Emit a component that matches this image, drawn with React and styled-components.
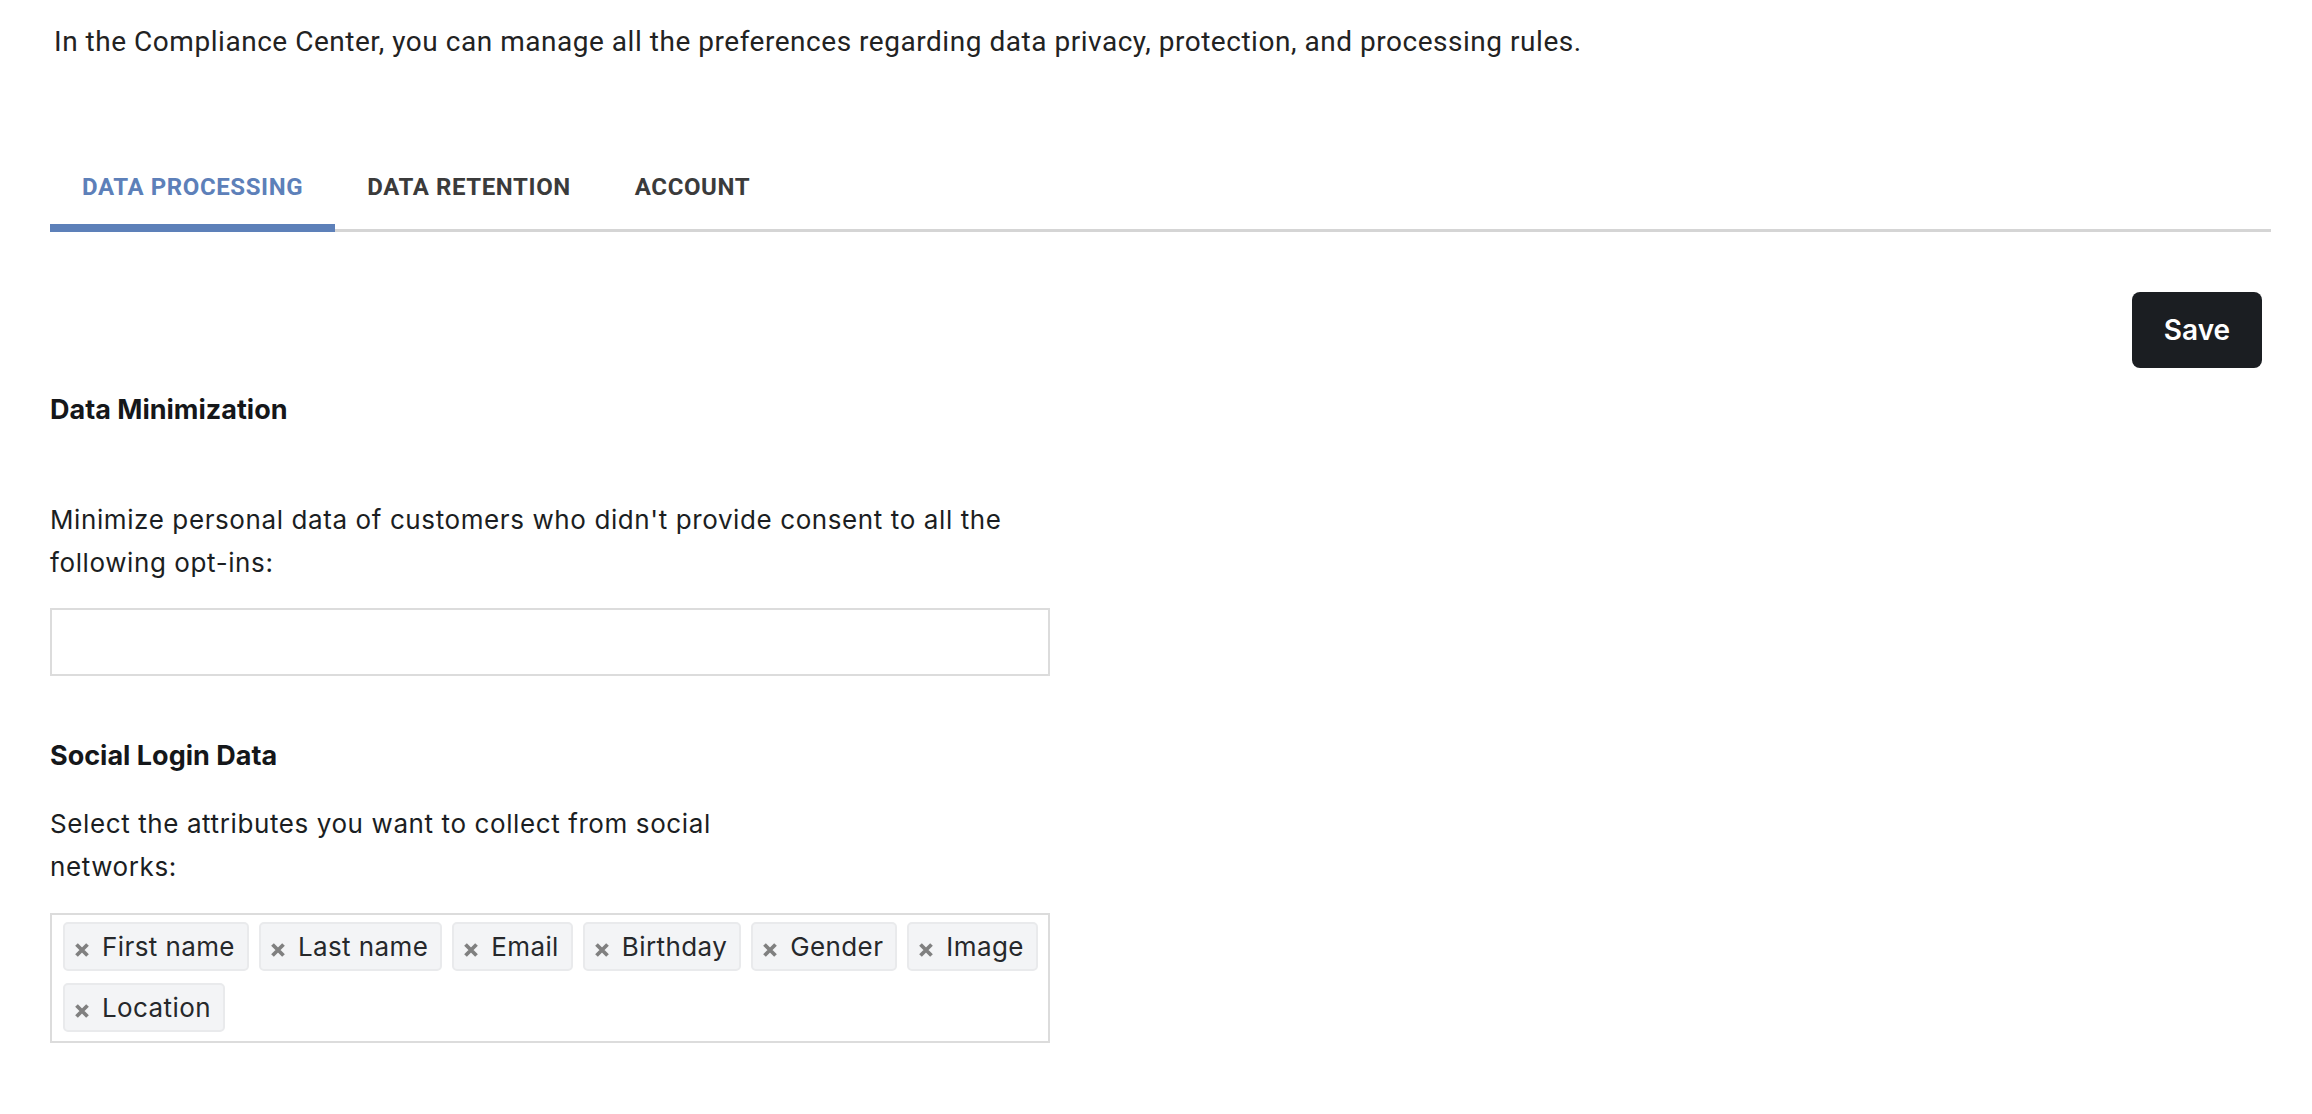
import React from 'react';
import styled, { createGlobalStyle } from 'styled-components';

const GlobalStyle = createGlobalStyle`
  body {
    margin: 0;
    background: #fff;
  }
`;

const Page = styled.div`
  padding: 21px 41px 40px 50px;
`;

const Intro = styled.p`
  margin: 0 0 0 4px;
  font-family: Roboto, 'Liberation Sans', sans-serif;
  font-size: 28px;
  letter-spacing: 0.53px;
  line-height: 42px;
  color: #222;
`;

const TabList = styled.div`
  display: flex;
  margin-top: 87px;
  border-bottom: 3px solid #d5d5d5;
`;

const Tab = styled.button`
  margin: 0 0 -3px;
  padding: 21px 32px;
  border: none;
  border-bottom: 8px solid ${(p) => (p.$active ? '#5d80b9' : 'transparent')};
  background: none;
  font-family: Roboto, 'Liberation Sans', sans-serif;
  font-weight: 700;
  font-size: 24px;
  letter-spacing: 0.6px;
  line-height: 32px;
  text-transform: uppercase;
  color: ${(p) => (p.$active ? '#5d80b9' : '#3b3b3b')};
  cursor: pointer;
`;

const Toolbar = styled.div`
  display: flex;
  justify-content: flex-end;
  margin-top: 60px;
  padding-right: 9px;
`;

const SaveButton = styled.button`
  width: 130px;
  height: 76px;
  border: none;
  border-radius: 8px;
  background: #1b1e22;
  color: #fff;
  font-family: Inter, sans-serif;
  font-weight: 600;
  font-size: 28px;
  cursor: pointer;
`;

const Section = styled.section`
  width: 1000px;
`;

const Heading = styled.h3`
  margin: ${(p) => p.$top}px 0 0;
  font-family: Inter, sans-serif;
  font-weight: 700;
  font-size: 27px;
  line-height: 40px;
  color: #15171a;
`;

const Description = styled.p`
  margin: ${(p) => p.$top}px 0 0;
  max-width: ${(p) => p.$max || 1000}px;
  font-family: Inter, sans-serif;
  font-size: 26px;
  letter-spacing: 0.6px;
  line-height: 43px;
  color: #1b1e22;
`;

const Field = styled.div`
  box-sizing: border-box;
  margin-top: 24px;
  height: 68px;
  border: 2px solid #dcdcdc;
  background: #fff;
`;

const TagBox = styled.div`
  box-sizing: border-box;
  display: flex;
  flex-wrap: wrap;
  gap: 12px 10px;
  margin-top: 25px;
  padding: 7px 4px 9px 11px;
  border: 2px solid #dcdcdc;
`;

const Chip = styled.span`
  box-sizing: border-box;
  display: inline-flex;
  align-items: center;
  gap: 12px;
  height: 49px;
  padding: 0 12px 0 9px;
  border: 2px solid #e9eaec;
  border-radius: 5px;
  background: #f3f4f6;
  font-family: Inter, sans-serif;
  font-size: 26px;
  letter-spacing: 0.4px;
  color: #26282b;
`;

const Remove = styled.svg`
  width: 16px;
  height: 16px;
  margin-top: 6px;
  flex: none;
`;

const tags = ['First name', 'Last name', 'Email', 'Birthday', 'Gender', 'Image', 'Location'];

export default function App() {
  return (
    <>
      <GlobalStyle />
      <Page>
        <Intro>
          In the Compliance Center, you can manage all the preferences regarding data privacy,
          protection, and processing rules.
        </Intro>

        <TabList>
          <Tab $active>Data Processing</Tab>
          <Tab>Data Retention</Tab>
          <Tab>Account</Tab>
        </TabList>

        <Toolbar>
          <SaveButton>Save</SaveButton>
        </Toolbar>

        <Section>
          <Heading $top={22}>Data Minimization</Heading>
          <Description $top={68}>
            Minimize personal data of customers who didn't provide consent to all the following
            opt-ins:
          </Description>
          <Field />

          <Heading $top={60}>Social Login Data</Heading>
          <Description $top={26} $max={700}>
            Select the attributes you want to collect from social networks:
          </Description>
          <TagBox>
            {tags.map((t) => (
              <Chip key={t}>
                <Remove viewBox="0 0 16 16">
                  <path d="M2.5 2.5l11 11M13.5 2.5l-11 11" stroke="#808080" strokeWidth="3.8" />
                </Remove>
                {t}
              </Chip>
            ))}
          </TagBox>
        </Section>
      </Page>
    </>
  );
}
